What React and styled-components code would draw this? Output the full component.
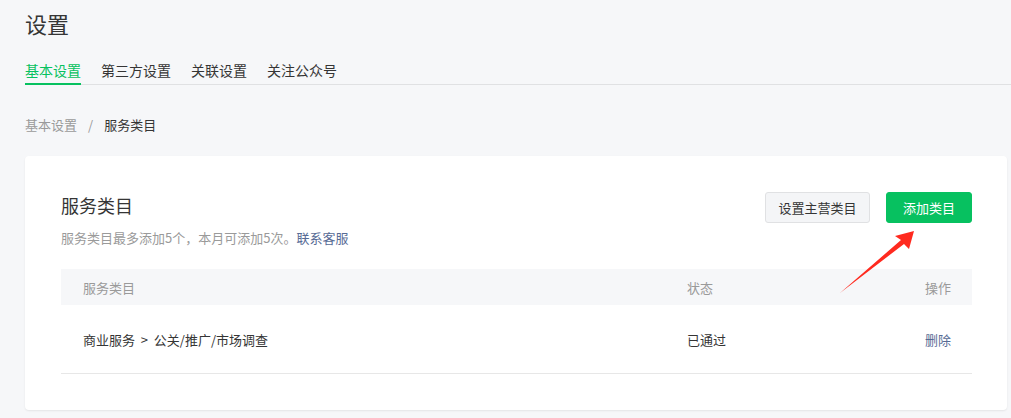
import React from "react";
import styled, { createGlobalStyle } from "styled-components";

const Global = createGlobalStyle`
  html, body { margin: 0; padding: 0; background: #f6f7f9; }
  body { font-family: "Noto Sans CJK SC", "Noto Sans", sans-serif; color: #353535; }
  * { box-sizing: border-box; }
`;

const Page = styled.div`
  position: relative;
  padding: 8px 4px 0 25px;
  min-height: 418px;
`;

const Title = styled.h1`
  margin: 0;
  font-size: 22px;
  line-height: 30px;
  font-weight: 400;
  color: #353535;
`;

const TabBar = styled.div`
  display: flex;
  gap: 20px;
  margin: 22px -4px 0 0;
  border-bottom: 1px solid #e0e1e3;
`;

const Tab = styled.div`
  font-size: 14px;
  line-height: 20px;
  padding-bottom: 3px;
  margin-bottom: -1px;
  border-bottom: 2px solid ${(p) => (p.$active ? "#07c160" : "transparent")};
  color: ${(p) => (p.$active ? "#07c160" : "#353535")};
`;

const Crumbs = styled.div`
  display: flex;
  align-items: center;
  gap: 11px;
  margin-top: 30px;
  font-size: 13px;
  line-height: 20px;
`;

const Crumb = styled.span`
  color: ${(p) => (p.$current ? "#353535" : "#9a9a9a")};
`;

const Card = styled.div`
  margin-top: 21px;
  background: #fff;
  border-radius: 4px;
  box-shadow: 0 1px 2px rgba(0, 0, 0, 0.08);
  padding: 36px 35px 36px 36px;
`;

const CardHead = styled.div`
  display: flex;
  justify-content: space-between;
  align-items: flex-start;
`;

const CardTitle = styled.div`
  font-size: 18px;
  line-height: 26px;
  color: #353535;
`;

const Desc = styled.div`
  margin-top: 10px;
  font-size: 13px;
  line-height: 20px;
  color: #9a9a9a;
`;

const Link = styled.a`
  color: #576b95;
  text-decoration: none;
`;

const Actions = styled.div`
  display: flex;
  gap: 16px;
`;

const Button = styled.button`
  height: 31px;
  width: ${(p) => (p.$primary ? "86px" : "105px")};
  padding: 0;
  font-family: inherit;
  font-size: 13px;
  border-radius: 3px;
  border: 1px solid ${(p) => (p.$primary ? "#07c160" : "#e0e1e3")};
  background: ${(p) => (p.$primary ? "#07c160" : "#f4f5f7")};
  color: ${(p) => (p.$primary ? "#fff" : "#353535")};
`;

const Table = styled.div`
  margin-top: 21px;
`;

const Row = styled.div`
  display: grid;
  grid-template-columns: 1fr 184px 80px;
  align-items: center;
  padding: 0 21px 0 22px;
  height: ${(p) => (p.$head ? "36px" : "69px")};
  background: ${(p) => (p.$head ? "#f6f7f9" : "#fff")};
  border-bottom: ${(p) => (p.$head ? "none" : "1px solid #e7e7e7")};
  font-size: 13px;
  color: ${(p) => (p.$head ? "#9a9a9a" : "#353535")};
`;

const Cell = styled.div`
  text-align: ${(p) => (p.$right ? "right" : "left")};
  white-space: pre;
`;

const OpLink = styled.a`
  color: #576b95;
  text-decoration: none;
`;

const Arrow = styled.svg`
  position: absolute;
  left: 830px;
  top: 225px;
  width: 90px;
  height: 75px;
`;

export default function App() {
  return (
    <>
      <Global />
      <Page>
        <Title>设置</Title>
        <TabBar>
          <Tab $active>基本设置</Tab>
          <Tab>第三方设置</Tab>
          <Tab>关联设置</Tab>
          <Tab>关注公众号</Tab>
        </TabBar>
        <Crumbs>
          <Crumb>基本设置</Crumb>
          <Crumb>/</Crumb>
          <Crumb $current>服务类目</Crumb>
        </Crumbs>
        <Card>
          <CardHead>
            <div>
              <CardTitle>服务类目</CardTitle>
              <Desc>
                服务类目最多添加5个，本月可添加5次。<Link href="#">联系客服</Link>
              </Desc>
            </div>
            <Actions>
              <Button>设置主营类目</Button>
              <Button $primary>添加类目</Button>
            </Actions>
          </CardHead>
          <Table>
            <Row $head>
              <Cell>服务类目</Cell>
              <Cell>状态</Cell>
              <Cell $right>操作</Cell>
            </Row>
            <Row>
              <Cell>{"商业服务  >  公关/推广/市场调查"}</Cell>
              <Cell>已通过</Cell>
              <Cell $right>
                <OpLink href="#">删除</OpLink>
              </Cell>
            </Row>
          </Table>
        </Card>
        <Arrow viewBox="830 225 90 75">
          <polygon
            points="914,231 895,236 901,240 840,293 904,244 909,249"
            fill="#ff2a1f"
          />
        </Arrow>
      </Page>
    </>
  );
}
